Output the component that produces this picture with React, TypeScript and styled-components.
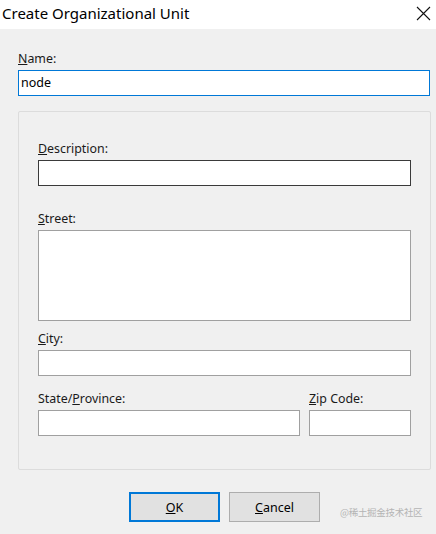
import React from "react";
import styled, { createGlobalStyle } from "styled-components";

const GlobalStyle = createGlobalStyle`
	html, body {
		margin: 0;
		padding: 0;
		background: #f0f0f0;
	}
	* {
		box-sizing: border-box;
	}
`;

const Window = styled.div`
	position: relative;
	width: 436px;
	height: 534px;
	background: #f0f0f0;
	font-family: "Noto Sans", "Liberation Sans", sans-serif;
	color: #000;
	overflow: hidden;
`;

const TitleBar = styled.div`
	display: flex;
	align-items: center;
	justify-content: space-between;
	height: 29px;
	padding: 0 5px 0 2px;
	background: #fff;
`;

const Title = styled.span`
	font-size: 15px;
	line-height: 29px;
	margin-top: -2px;
`;

const CloseButton = styled.div`
	display: flex;
	align-items: center;
	justify-content: center;
	width: 16px;
	height: 16px;
	margin-top: -2px;
`;

const Body = styled.div`
	display: flex;
	flex-direction: column;
	padding: 21px 6px 0 18px;
`;

const Label = styled.label`
	display: block;
	height: 20px;
	font-size: 12.4px;
	line-height: 17px;
	color: #1a1a1a;
`;

const Field = styled.div<{ $top?: number; $grow?: boolean }>`
	display: flex;
	flex-direction: column;
	margin-top: ${(p) => p.$top ?? 0}px;
	flex: ${(p) => (p.$grow ? 1 : "none")};
`;

const Input = styled.div<{ $h?: number; $border?: string; $w?: number; $thick?: boolean }>`
	height: ${(p) => p.$h ?? 26}px;
	width: ${(p) => (p.$w ? `${p.$w}px` : "100%")};
	background: #fff;
	border: ${(p) => (p.$thick ? 1.5 : 1)}px solid ${(p) => p.$border ?? "#a0a0a0"};
	font-size: 12.5px;
	line-height: 23px;
	padding: 0 2px;
`;

const GroupBox = styled.div`
	display: flex;
	flex-direction: column;
	height: 359px;
	margin-top: 15px;
	margin-right: -1px;
	padding: 28px 19px 0 19px;
	border: 1px solid #dcdcdc;
	border-radius: 2px;
`;

const Row = styled.div`
	display: flex;
	gap: 9px;
`;

const ButtonRow = styled.div`
	display: flex;
	gap: 9px;
	margin-top: 22px;
	padding-left: 111px;
`;

const Button = styled.div<{ $default?: boolean }>`
	display: flex;
	align-items: center;
	justify-content: center;
	width: 91px;
	height: 30px;
	font-size: 12.5px;
	background: #e1e1e1;
	border: ${(p) => (p.$default ? "2px solid #0078d7" : "1px solid #adadad")};
`;

const Watermark = styled.span`
	position: absolute;
	left: 340px;
	top: 505px;
	font-size: 9.5px;
	color: #b4b4b4;
	font-family: "Noto Sans CJK SC", "Noto Sans", sans-serif;
	letter-spacing: -0.3px;
`;

export default function App() {
	return (
		<Window>
			<GlobalStyle />
			<TitleBar>
				<Title>Create Organizational Unit</Title>
				<CloseButton>
					<svg width="15" height="15" viewBox="0 0 15 15">
						<path d="M1 1 L14 14 M14 1 L1 14" stroke="#111" strokeWidth="1.1" fill="none" />
					</svg>
				</CloseButton>
			</TitleBar>
			<Body>
				<Field>
					<Label>
						<u>N</u>ame:
					</Label>
					<Input $border="#0078d7">node</Input>
				</Field>
				<GroupBox>
					<Field>
						<Label>
							<u>D</u>escription:
						</Label>
						<Input $border="#3a3a3a" $thick />
					</Field>
					<Field $top={24}>
						<Label>
							<u>S</u>treet:
						</Label>
						<Input $h={91} />
					</Field>
					<Field $top={9}>
						<Label>
							<u>C</u>ity:
						</Label>
						<Input />
					</Field>
					<Row>
						<Field $top={14} $grow>
							<Label>
								State/<u>P</u>rovince:
							</Label>
							<Input />
						</Field>
						<Field $top={14}>
							<Label>
								<u>Z</u>ip Code:
							</Label>
							<Input $w={102} />
						</Field>
					</Row>
				</GroupBox>
				<ButtonRow>
					<Button $default>
						<span>
							<u>O</u>K
						</span>
					</Button>
					<Button>
						<span>
							<u>C</u>ancel
						</span>
					</Button>
				</ButtonRow>
			</Body>
			<Watermark>@稀土掘金技术社区</Watermark>
		</Window>
	);
}
